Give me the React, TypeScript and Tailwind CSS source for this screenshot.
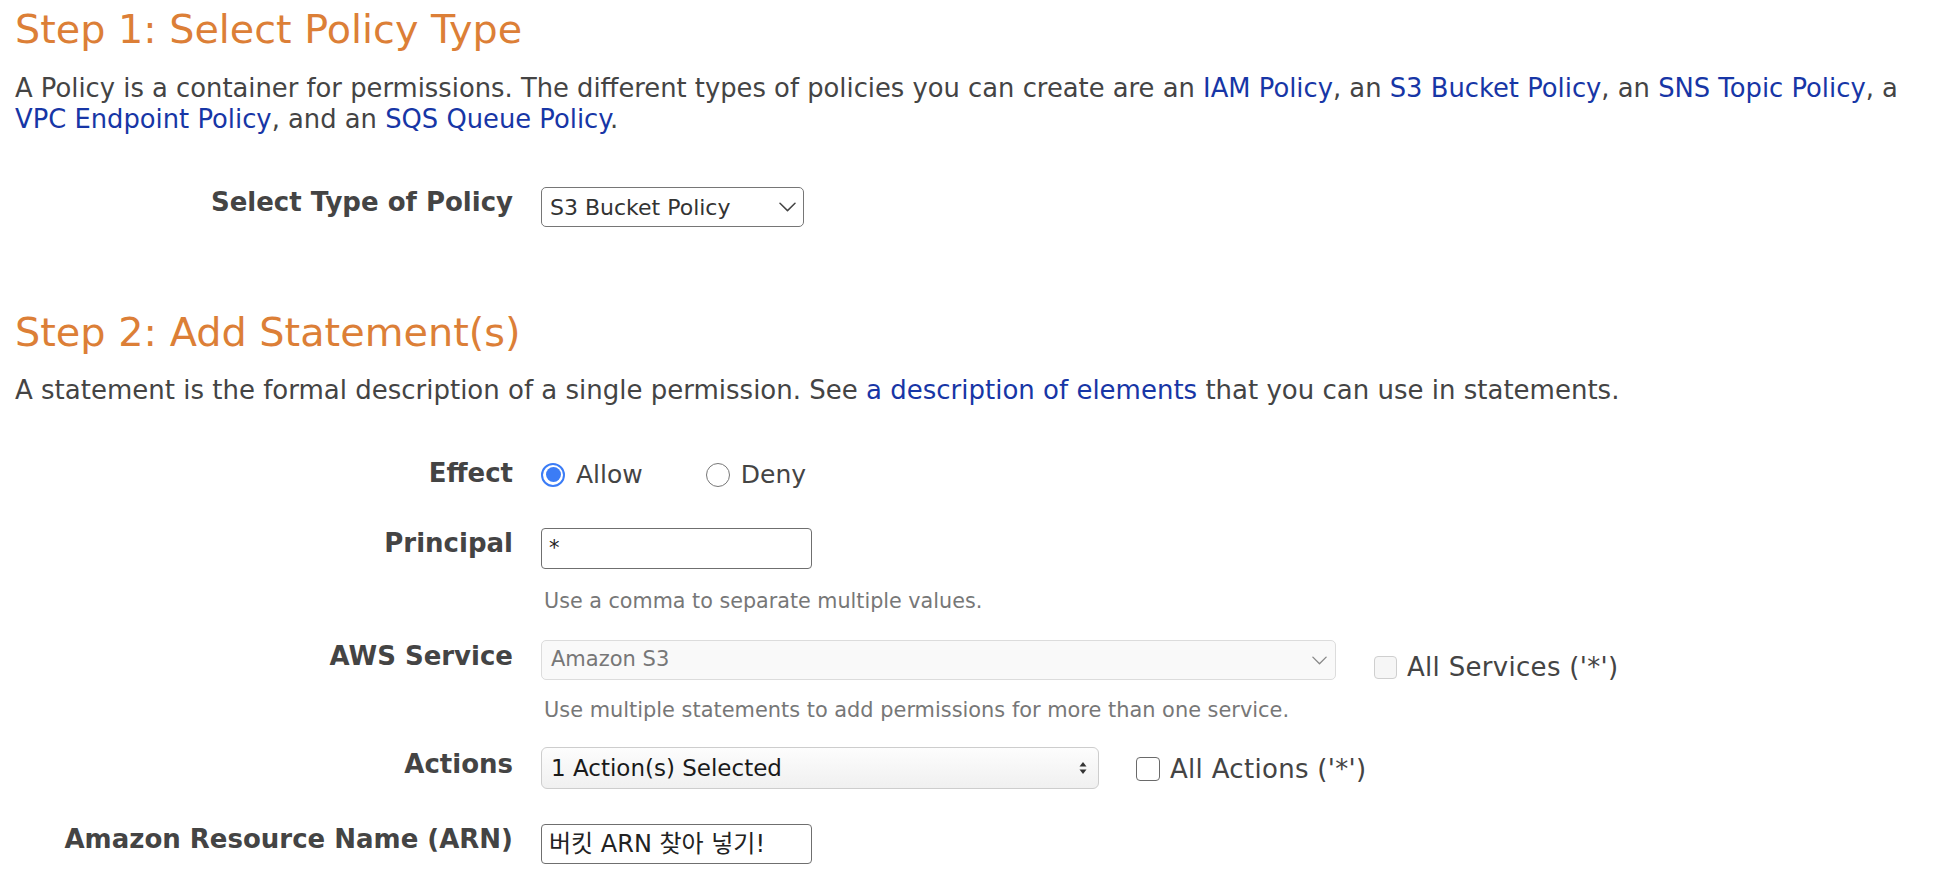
import React from "react";

const Chevron = ({ color = "#444", w = 17, h = 10 }: { color?: string; w?: number; h?: number }) => (
  <svg width={w} height={h} viewBox="0 0 17 10" fill="none">
    <path d="M1 1.2 L8.5 8.6 L16 1.2" stroke={color} strokeWidth="1.5" strokeLinecap="round" strokeLinejoin="round" />
  </svg>
);

const UpDown = () => (
  <svg width="10" height="16" viewBox="0 0 10 16">
    <path d="M5 2 L8.5 6.5 L1.5 6.5 Z" fill="#333" />
    <path d="M5 14 L8.5 9.5 L1.5 9.5 Z" fill="#333" />
  </svg>
);

const Link = ({ children }: { children: React.ReactNode }) => (
  <a className="text-[#1736a6] cursor-pointer">{children}</a>
);

function Row({
  label,
  labelMt,
  children,
  className = "",
}: {
  label: string;
  labelMt: string;
  children: React.ReactNode;
  className?: string;
}) {
  return (
    <div className={`flex items-start ${className}`}>
      <div className={`w-[498px] shrink-0 text-right font-bold text-[26px] leading-[31px] text-[#444] whitespace-nowrap ${labelMt}`}>
        {label}
      </div>
      <div className="ml-[28px] flex items-start">{children}</div>
    </div>
  );
}

export default function App() {
  return (
    <div className="min-h-[880px] bg-white font-['DejaVu_Sans','Noto_Sans_CJK_KR',Verdana,sans-serif] text-[#444] pt-[6px] px-[15px] overflow-hidden">
      <h1 className="text-[39.7px] leading-[46px] text-[#dc7f37] font-normal whitespace-nowrap">Step 1: Select Policy Type</h1>
      <p className="mt-[21px] text-[25.8px] leading-[31px] whitespace-nowrap">
        A Policy is a container for permissions. The different types of policies you can create are an{" "}
        <Link>IAM Policy</Link>, an <Link>S3 Bucket Policy</Link>, an <Link>SNS Topic Policy</Link>, a
        <br />
        <Link>VPC Endpoint Policy</Link>, and an <Link>SQS Queue Policy</Link>.
      </p>

      <Row label="Select Type of Policy" labelMt="mt-0" className="mt-[52px]">
        <div className="w-[263px] h-[40px] border-[1.5px] border-[#767676] rounded-[5px] bg-white flex items-center justify-between pl-[8px] pr-[7px] text-[22px] text-[#333]">
          <span>S3 Bucket Policy</span>
          <Chevron color="#444" />
        </div>
      </Row>

      <h1 className="mt-[82px] text-[39.8px] leading-[46px] text-[#dc7f37] font-normal whitespace-nowrap">Step 2: Add Statement(s)</h1>
      <p className="mt-[20px] text-[26px] leading-[31px] whitespace-nowrap">
        A statement is the formal description of a single permission. See <Link>a description of elements</Link>{" "}
        that you can use in statements.
      </p>

      <Row label="Effect" labelMt="mt-[-1px]" className="mt-[53px]">
        <div className="h-[31px] flex items-center text-[25px]">
          <span className="w-[24px] h-[24px] rounded-full border-[2px] border-[#3b7cf6] p-[2.5px] bg-white flex">
            <span className="w-full h-full rounded-full bg-[#3b7cf6]" />
          </span>
          <span className="ml-[11px]">Allow</span>
          <span className="ml-[63px] w-[24px] h-[24px] rounded-full border-[1.5px] border-[#777] bg-white" />
          <span className="ml-[11px]">Deny</span>
        </div>
      </Row>

      <Row label="Principal" labelMt="mt-0" className="mt-[38px]">
        <div className="w-[271px] h-[41px] border-[1.5px] border-[#6f6f6f] rounded-[4px] bg-white flex items-start pt-[4px] pl-[7px] text-[21px] text-[#222]">
          *
        </div>
      </Row>
      <div className="ml-[529px] mt-[20px] text-[20.7px] leading-[24px] text-[#777] whitespace-nowrap">
        Use a comma to separate multiple values.
      </div>

      <Row label="AWS Service" labelMt="mt-[1px]" className="mt-[27px]">
        <div className="w-[795px] h-[40px] border-[1.5px] border-[#dcdcdc] rounded-[5px] bg-[#f9f9f9] flex items-center justify-between pl-[9px] pr-[8px] text-[21px] text-[#777]">
          <span>Amazon S3</span>
          <Chevron color="#888" w={15} h={9} />
        </div>
        <div className="ml-[38px] mt-[14px] flex items-center text-[26px] tracking-[0.3px] leading-[26px]">
          <span className="w-[23px] h-[23px] rounded-[4px] border-[1.5px] border-[#cfcfcf] bg-[#f6f6f6]" />
          <span className="ml-[10px] text-[#444] whitespace-nowrap">All Services ('*')</span>
        </div>
      </Row>
      <div className="ml-[529px] mt-[18px] text-[20.9px] leading-[24px] text-[#777] whitespace-nowrap">
        Use multiple statements to add permissions for more than one service.
      </div>

      <Row label="Actions" labelMt="mt-[2px]" className="mt-[25px]">
        <div className="w-[558px] h-[42px] border-[1.5px] border-[#cdcdcd] rounded-[6px] bg-gradient-to-b from-[#fdfdfd] to-[#f0f0f0] flex items-center justify-between pl-[9px] pr-[10px] text-[23px] text-[#1a1a1a]">
          <span>1 Action(s) Selected</span>
          <UpDown />
        </div>
        <div className="ml-[37px] mt-[9px] flex items-center text-[26px] tracking-[0.3px] leading-[26px]">
          <span className="w-[24px] h-[24px] rounded-[4px] border-[1.5px] border-[#6a6a6a] bg-white" />
          <span className="ml-[10px] text-[#444] whitespace-nowrap">All Actions ('*')</span>
        </div>
      </Row>

      <Row label="Amazon Resource Name (ARN)" labelMt="mt-0" className="mt-[35px]">
        <div className="w-[271px] h-[40px] border-[1.5px] border-[#6f6f6f] rounded-[4px] bg-white flex items-center pl-[7px] text-[24px] text-[#222] whitespace-nowrap overflow-hidden">
          버킷 ARN 찾아 넣기!
        </div>
      </Row>
    </div>
  );
}
